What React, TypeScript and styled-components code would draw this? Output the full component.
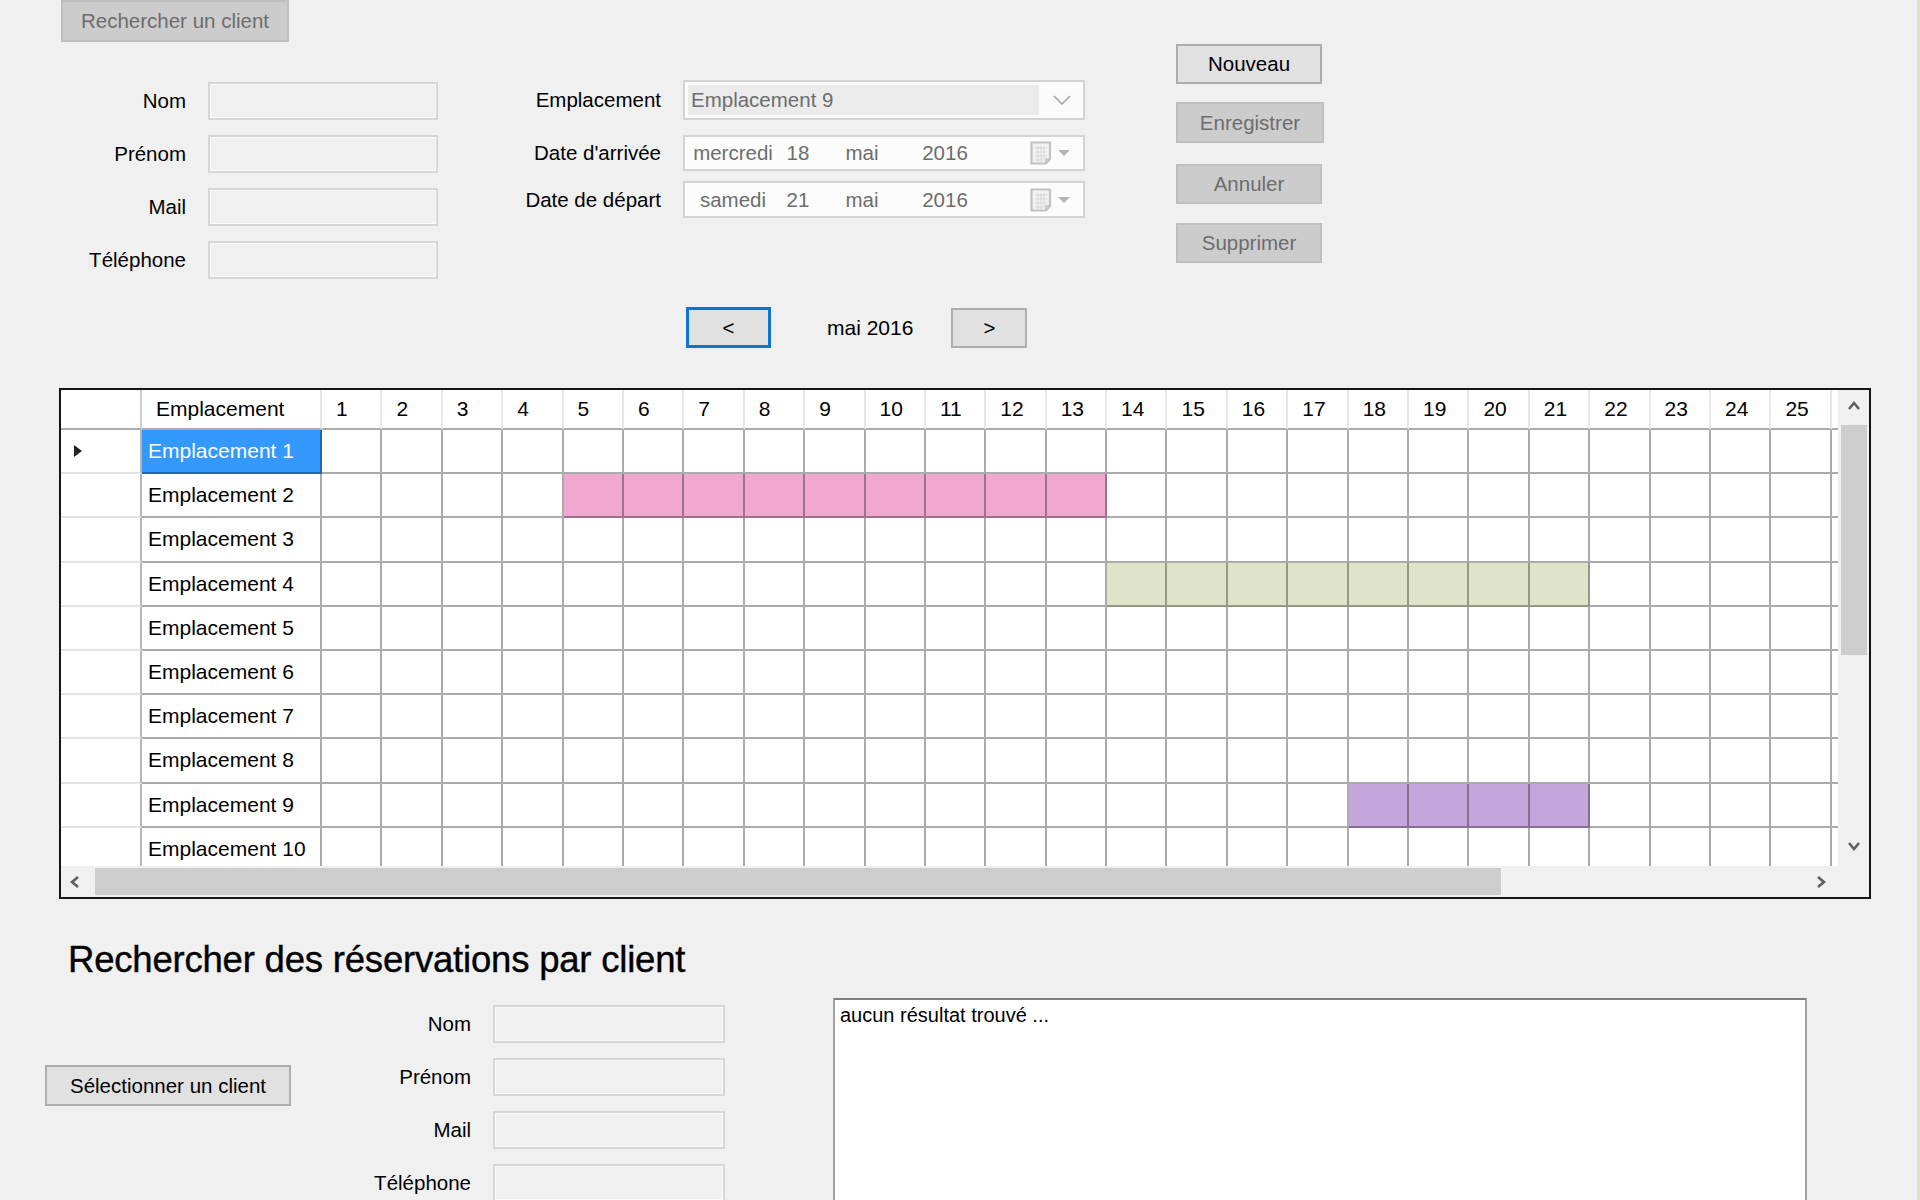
import React from 'react';
import styled, { createGlobalStyle } from 'styled-components';

const GlobalStyle = createGlobalStyle`
    html, body {
        margin: 0;
        padding: 0;
        background: #f0f0f0;
    }
    * {
        box-sizing: border-box;
    }
`

// visible part of the planning: 25 full days + a sliver of the 26th
const DAYS = Array.from({ length: 26 }, (_, i) => i + 1);
const ROWS = Array.from({ length: 10 }, (_, i) => `Emplacement ${i + 1}`);

const BOOKINGS = [
    { row: 2, from: 5, to: 13, color: '#f1a8cf' },
    { row: 4, from: 14, to: 21, color: '#dfe3c7' },
    { row: 9, from: 18, to: 21, color: '#c5a5dc' },
];

function bookingColor(row: number, day: number) {
    const b = BOOKINGS.find(x => x.row === row && day >= x.from && day <= x.to);
    return b ? b.color : '#ffffff';
}

const Window = styled.div`
    width: 1920px;
    height: 1200px;
    overflow: hidden;
    background: #f0f0f0;
    border-right: 3px solid #d9e6c6;
    font-family: 'Liberation Sans', Arial, sans-serif;
    font-size: 20.5px;
    color: #000;
`

type Variant = 'normal' | 'disabled' | 'focus';

const Button = styled.button<{ $variant?: Variant; $w: number; $h: number; $mt?: number }>`
    width: ${p => p.$w}px;
    height: ${p => p.$h}px;
    margin-top: ${p => p.$mt || 0}px;
    padding: 0;
    display: flex;
    align-items: center;
    justify-content: center;
    font-family: inherit;
    font-size: 20.5px;
    background: ${p => p.$variant === 'disabled' ? '#cccccc' : '#e1e1e1'};
    color: ${p => p.$variant === 'disabled' ? '#6d6d6d' : '#000'};
    border: ${p => p.$variant === 'focus' ? '3px solid #0a74d6' : p.$variant === 'disabled' ? '2px solid #bfbfbf' : '2px solid #adadad'};
    flex-shrink: 0;
`

const SearchRow = styled.div`
    padding-left: 61px;
`

const FormRow = styled.div`
    display: flex;
    align-items: flex-start;
`

const ClientFields = styled.div`
    display: grid;
    grid-template-columns: 125px 230px;
    grid-auto-rows: 38px;
    column-gap: 22px;
    row-gap: 15px;
    margin: 40px 0 0 61px;
`

const Label = styled.label`
    display: flex;
    align-items: center;
    justify-content: flex-end;
    white-space: nowrap;
`

const TextBox = styled.div`
    background: #f0f0f0;
    border: 2px solid #d6d6d6;
    box-shadow: inset 0 0 0 1px #fafafa;
`

const StayFields = styled.div`
    display: flex;
    flex-direction: column;
    margin: 38px 0 0 62px;
`

const StayRow = styled.div<{ $h: number; $mt?: number }>`
    display: grid;
    grid-template-columns: 161px 402px;
    column-gap: 22px;
    height: ${p => p.$h}px;
    margin-top: ${p => p.$mt || 0}px;
`

const Combo = styled.div`
    display: flex;
    align-items: center;
    background: #fbfbfb;
    border: 2px solid #d4d4d4;
    padding: 3px 12px 3px 3px;
`

const ComboText = styled.div`
    flex: 1;
    align-self: stretch;
    display: flex;
    align-items: center;
    padding-left: 3px;
    margin-right: 14px;
    background: #ebebeb;
    color: #6d6d6d;
`

const DateBox = styled.div`
    display: flex;
    align-items: center;
    background: #fcfcfc;
    border: 2px solid #d4d4d4;
    padding: 0 12px 0 4px;
    color: #6d6d6d;
`

const DatePart = styled.span<{ $w: number }>`
    width: ${p => p.$w}px;
    text-align: center;
`

const Spacer = styled.div`
    flex: 1;
`

const Actions = styled.div`
    display: flex;
    flex-direction: column;
    margin: 2px 0 0 91px;
`

const MonthNav = styled.div`
    display: flex;
    align-items: center;
    margin-top: 28px;
    padding-left: 686px;
`

const MonthLabel = styled.span`
    margin: 0 38px 0 56px;
    font-size: 21px;
`

const GridFrame = styled.div`
    width: 1812px;
    height: 511px;
    margin: 40px 0 0 59px;
    border: 2px solid #151515;
    display: flex;
    flex-direction: column;
    background: #f0f0f0;
`

const GridTop = styled.div`
    display: flex;
    height: 476px;
`

const Viewport = styled.div`
    width: 1777px;
    height: 476px;
    overflow: hidden;
    background: #fff;
`

const Table = styled.div`
    display: grid;
    grid-template-columns: 81px 180px repeat(26, 60.4px);
    grid-template-rows: 40px;
    grid-auto-rows: 44.2px;
    font-size: 21px;
`

const CornerCell = styled.div`
    background: #fff;
    border-right: 2px solid #cfcfcf;
    border-bottom: 2px solid #ababab;
`

const HeadCell = styled.div`
    display: flex;
    align-items: center;
    padding-left: 14px;
    background: #fff;
    border-right: 2px solid #e6e6e6;
    border-bottom: 2px solid #ababab;
    white-space: nowrap;
    overflow: hidden;
`

const RowHead = styled.div`
    display: flex;
    align-items: center;
    padding-left: 12px;
    background: #fff;
    border-right: 2px solid #b4b4b4;
    border-bottom: 2px solid #e4e4e4;
`

const Cell = styled.div<{ $bg?: string; $selected?: boolean }>`
    display: flex;
    align-items: center;
    padding-left: 6px;
    white-space: nowrap;
    overflow: hidden;
    background: ${p => p.$selected ? '#3399ff' : p.$bg || '#fff'};
    color: ${p => p.$selected ? '#fff' : '#000'};
    border-right: 2px solid rgba(0, 0, 0, 0.33);
    border-bottom: 2px solid rgba(0, 0, 0, 0.33);
`

const VScroll = styled.div`
    width: 31px;
    display: flex;
    flex-direction: column;
    align-items: center;
    background: #f0f0f0;
`

const HScrollRow = styled.div`
    display: flex;
    height: 31px;
`

const HScroll = styled.div`
    width: 1777px;
    display: flex;
    align-items: center;
    background: #f0f0f0;
`

const ArrowBox = styled.div<{ $w: number; $h: number }>`
    width: ${p => p.$w}px;
    height: ${p => p.$h}px;
    display: flex;
    align-items: center;
    justify-content: center;
    flex-shrink: 0;
`

const Thumb = styled.div<{ $w: number; $h: number; $ml?: number; $mt?: number }>`
    width: ${p => p.$w}px;
    height: ${p => p.$h}px;
    margin-left: ${p => p.$ml || 0}px;
    margin-top: ${p => p.$mt || 0}px;
    background: #cdcdcd;
    flex-shrink: 0;
`

const Corner = styled.div`
    width: 31px;
    background: #f0f0f0;
`

const Title = styled.h2`
    margin: 41px 0 0 0;
    padding-left: 68px;
    font-size: 36.5px;
    line-height: 40px;
    font-weight: 400;
    letter-spacing: -0.2px;
    -webkit-text-stroke: 0.4px #000;
`

const BottomRow = styled.div`
    display: flex;
    align-items: flex-start;
    margin-top: 18px;
    padding-left: 45px;
`

const SearchFields = styled.div`
    display: grid;
    grid-template-columns: 180px 232px;
    grid-auto-rows: 38px;
    column-gap: 22px;
    row-gap: 15px;
    margin-top: 7px;
`

const ResultBox = styled.div`
    width: 974px;
    height: 260px;
    margin-left: 108px;
    background: #fff;
    border: 2px solid #a3a3a3;
    border-top-color: #7f7f7f;
    padding: 4px 5px;
    font-size: 20px;
`

const Chevron = ({ dir, color = '#5f5f5f' }: { dir: 'up' | 'down' | 'left' | 'right'; color?: string }) => {
    const pts = {
        up: '2,9 7,3 12,9',
        down: '2,3 7,9 12,3',
        left: '9,2 3,7 9,12',
        right: '4,2 10,7 4,12',
    }[dir];
    return (
        <svg width="14" height="14" viewBox="0 0 14 14">
            <polyline points={pts} fill="none" stroke={color} strokeWidth="2.6" />
        </svg>
    );
};

const CalendarIcon = () => (
    <svg width="22" height="24" viewBox="0 0 22 24">
        <path d="M1.5 1.5 H20 V18 L16 22.5 H1.5 Z" fill="#f2f2f2" stroke="#c2c2c2" strokeWidth="2.2" />
        <path d="M5 7 H17 M5 11 H17 M5 15 H17 M5 19 H13 M8 5 V21 M11 5 V21 M14 5 V19" stroke="#d8d8d8" strokeWidth="1" />
        <path d="M16 22.5 V18 H20" fill="none" stroke="#c2c2c2" strokeWidth="1.6" />
    </svg>
);

const DropArrow = () => (
    <svg width="14" height="8" viewBox="0 0 14 8" style={{ marginLeft: 5 }}>
        <polygon points="1,1 13,1 7,7" fill="#b3b3b3" />
    </svg>
);

const ComboChevron = () => (
    <svg width="18" height="10" viewBox="0 0 18 10">
        <polyline points="1,1 9,9 17,1" fill="none" stroke="#a0a0a0" strokeWidth="1.5" />
    </svg>
);

const RowMarker = () => (
    <svg width="10" height="14" viewBox="0 0 10 14">
        <polygon points="1,1 9,7 1,13" fill="#222" />
    </svg>
);

function DatePicker({ day, num }: { day: string; num: string }) {
    return (
        <DateBox>
            <DatePart $w={88}>{day}</DatePart>
            <DatePart $w={42}>{num}</DatePart>
            <DatePart $w={86}>mai</DatePart>
            <DatePart $w={80}>2016</DatePart>
            <Spacer />
            <CalendarIcon />
            <DropArrow />
        </DateBox>
    );
}

function ClientForm() {
    return (
        <>
            <Label>Nom</Label>
            <TextBox />
            <Label>Prénom</Label>
            <TextBox />
            <Label>Mail</Label>
            <TextBox />
            <Label>Téléphone</Label>
            <TextBox />
        </>
    );
}

function Planning() {
    return (
        <GridFrame>
            <GridTop>
                <Viewport>
                    <Table>
                        <CornerCell />
                        <HeadCell>Emplacement</HeadCell>
                        {DAYS.map(d => <HeadCell key={d}>{d < 26 ? d : ''}</HeadCell>)}
                        {ROWS.map((name, i) => (
                            <React.Fragment key={name}>
                                <RowHead>{i === 0 && <RowMarker />}</RowHead>
                                <Cell $selected={i === 0}>{name}</Cell>
                                {DAYS.map(d => <Cell key={d} $bg={bookingColor(i + 1, d)} />)}
                            </React.Fragment>
                        ))}
                    </Table>
                </Viewport>
                <VScroll>
                    <ArrowBox $w={31} $h={34}><Chevron dir="up" /></ArrowBox>
                    <Thumb $w={26} $h={230} $mt={1} />
                    <Spacer />
                    <ArrowBox $w={31} $h={38}><Chevron dir="down" /></ArrowBox>
                </VScroll>
            </GridTop>
            <HScrollRow>
                <HScroll>
                    <ArrowBox $w={30} $h={31}><Chevron dir="left" /></ArrowBox>
                    <Thumb $w={1406} $h={27} $ml={4} />
                    <Spacer />
                    <ArrowBox $w={34} $h={31}><Chevron dir="right" /></ArrowBox>
                </HScroll>
                <Corner />
            </HScrollRow>
        </GridFrame>
    );
}

export default function App() {
    return (
        <Window>
            <GlobalStyle />
            <SearchRow>
                <Button $variant="disabled" $w={228} $h={42}>Rechercher un client</Button>
            </SearchRow>
            <FormRow>
                <ClientFields>
                    <ClientForm />
                </ClientFields>
                <StayFields>
                    <StayRow $h={40}>
                        <Label>Emplacement</Label>
                        <Combo>
                            <ComboText>Emplacement 9</ComboText>
                            <ComboChevron />
                        </Combo>
                    </StayRow>
                    <StayRow $h={36} $mt={15}>
                        <Label>Date d'arrivée</Label>
                        <DatePicker day="mercredi" num="18" />
                    </StayRow>
                    <StayRow $h={37} $mt={10}>
                        <Label>Date de départ</Label>
                        <DatePicker day="samedi" num="21" />
                    </StayRow>
                </StayFields>
                <Actions>
                    <Button $w={146} $h={40}>Nouveau</Button>
                    <Button $variant="disabled" $w={148} $h={41} $mt={18}>Enregistrer</Button>
                    <Button $variant="disabled" $w={146} $h={40} $mt={21}>Annuler</Button>
                    <Button $variant="disabled" $w={146} $h={40} $mt={19}>Supprimer</Button>
                </Actions>
            </FormRow>
            <MonthNav>
                <Button $variant="focus" $w={85} $h={41}>&lt;</Button>
                <MonthLabel>mai 2016</MonthLabel>
                <Button $w={76} $h={40}>&gt;</Button>
            </MonthNav>
            <Planning />
            <Title>Rechercher des réservations par client</Title>
            <BottomRow>
                <Button $w={246} $h={41} $mt={67}>Sélectionner un client</Button>
                <SearchFields>
                    <ClientForm />
                </SearchFields>
                <ResultBox>aucun résultat trouvé ...</ResultBox>
            </BottomRow>
        </Window>
    );
}
